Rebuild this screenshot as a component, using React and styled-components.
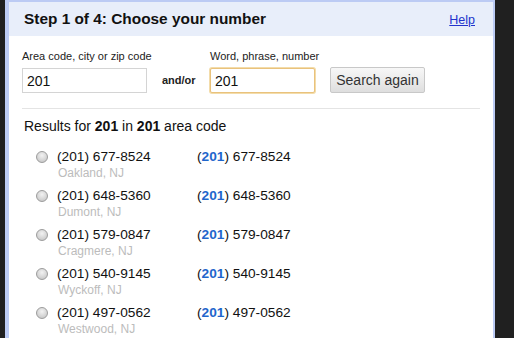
import React from "react";
import styled, { createGlobalStyle } from "styled-components";

const Global = createGlobalStyle`
  html, body { margin: 0; padding: 0; background: #202020; }
  body { font-family: "Liberation Sans", Arial, sans-serif; color: #222; }
  * { box-sizing: border-box; }
`;

const Page = styled.div`
  padding-left: 5px;
  height: 338px;
  overflow: hidden;
`;

const Panel = styled.div`
  width: 490px;
  min-height: 400px;
  background: #fff;
  border-left: 4px solid #bccbf4;
  border-right: 2px solid #bccbf4;
  border-top: 2px solid #bccbf4;
`;

const Header = styled.div`
  height: 34px;
  background: #e8eefa;
  display: flex;
  align-items: center;
  justify-content: space-between;
  padding: 0 18px 0 15px;
`;

const Title = styled.h1`
  margin: 0;
  font-size: 15.4px;
  font-weight: bold;
  color: #111;
`;

const HelpLink = styled.a`
  font-size: 12.5px;
  color: #2233cc;
  text-decoration: underline;
  margin-top: 1px;
`;

const Body = styled.div`
  padding: 13px 13px 0 13px;
`;

const Form = styled.div`
  display: flex;
  align-items: flex-end;
`;

const Field = styled.div`
  display: flex;
  flex-direction: column;
  gap: 5px;
  width: ${(p) => p.$w}px;
  flex: none;
`;

const Label = styled.label`
  font-size: 11px;
  line-height: 14px;
  color: #222;
  white-space: nowrap;
`;

const Input = styled.input`
  width: 100%;
  height: 25px;
  border: 1px solid ${(p) => (p.$focus ? "#e9c27c" : "#d4d4d4")};
  box-shadow: ${(p) => (p.$focus ? "0 0 0 1px #f3dcaa" : "none")};
  border-radius: ${(p) => (p.$focus ? "2px" : "0")};
  font-family: "Liberation Sans", Arial, sans-serif;
  font-size: 14px;
  color: #111;
  padding: 0 0 0 4px;
  outline: none;
`;

const AndOr = styled.span`
  flex: none;
  font-size: 11px;
  font-weight: bold;
  line-height: 25px;
  width: 63px;
  padding-left: 15px;
  color: #222;
`;

const Button = styled.button`
  flex: none;
  margin-left: 15px;
  height: 26px;
  width: 95px;
  padding: 0;
  border: 1px solid #c8c8c8;
  border-radius: 2px;
  background: linear-gradient(#f7f7f7, #ebebeb 50%, #dedede);
  font-family: "Liberation Sans", Arial, sans-serif;
  font-size: 14px;
  color: #333;
`;

const Divider = styled.div`
  width: 458px;
  height: 1px;
  background: #e4e4e4;
  margin-top: 15px;
`;

const ResultsFor = styled.p`
  margin: 8px 0 0 2px;
  font-size: 14px;
  line-height: 18px;
  color: #111;
`;

const List = styled.div`
  margin-top: 13px;
  padding-left: 14px;
  display: flex;
  flex-direction: column;
  gap: 7px;
`;

const Row = styled.div`
  display: grid;
  grid-template-columns: 21px 140px auto;
  grid-template-rows: 18px 14px;
`;

const Radio = styled.span`
  width: 12px;
  height: 12px;
  border-radius: 50%;
  border: 1px solid #9c9c9c;
  background: radial-gradient(circle at 50% 35%, #f2f2f2, #cfcfcf 70%, #bdbdbd);
  align-self: center;
`;

const Phone = styled.span`
  font-size: 13.7px;
  line-height: 18px;
  color: #111;
`;

const Area = styled.b`
  color: #1f66cc;
`;

const City = styled.span`
  grid-column: 2 / 4;
  font-size: 12px;
  line-height: 14px;
  color: #bcbcbc;
  padding-left: 1px;
`;

const results = [
  ["677-8524", "Oakland, NJ"],
  ["648-5360", "Dumont, NJ"],
  ["579-0847", "Cragmere, NJ"],
  ["540-9145", "Wyckoff, NJ"],
  ["497-0562", "Westwood, NJ"],
];

export default function App() {
  return (
    <>
      <Global />
      <Page>
        <Panel>
          <Header>
            <Title>Step 1 of 4: Choose your number</Title>
            <HelpLink href="#">Help</HelpLink>
          </Header>
          <Body>
            <Form>
              <Field $w={125}>
                <Label>Area code, city or zip code</Label>
                <Input defaultValue="201" />
              </Field>
              <AndOr>and/or</AndOr>
              <Field $w={105}>
                <Label>Word, phrase, number</Label>
                <Input $focus defaultValue="201" />
              </Field>
              <Button>Search again</Button>
            </Form>
            <Divider />
            <ResultsFor>
              Results for <b>201</b> in <b>201</b> area code
            </ResultsFor>
            <List>
              {results.map(([num, city]) => (
                <Row key={num}>
                  <Radio />
                  <Phone>(201) {num}</Phone>
                  <Phone>
                    (<Area>201</Area>) {num}
                  </Phone>
                  <span />
                  <City>{city}</City>
                </Row>
              ))}
            </List>
          </Body>
        </Panel>
      </Page>
    </>
  );
}
